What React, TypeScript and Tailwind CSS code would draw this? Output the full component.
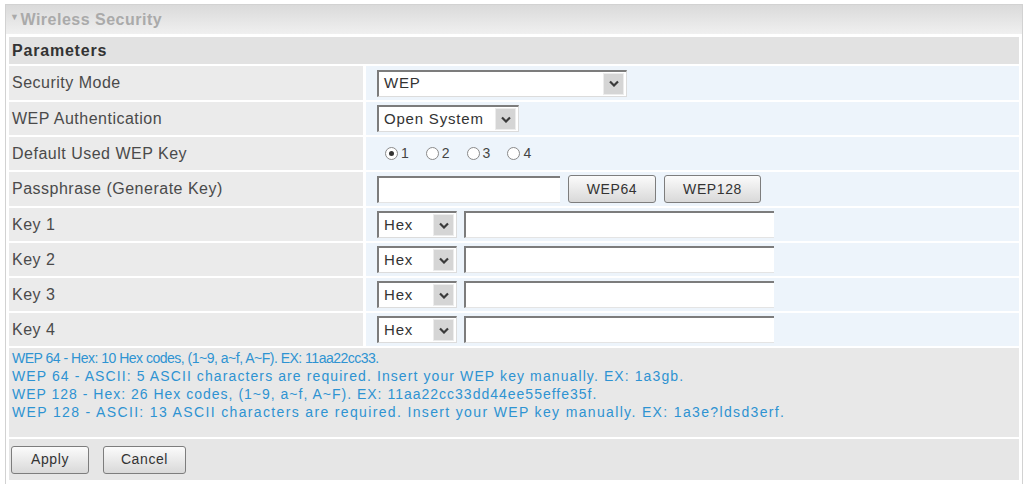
import React from 'react'

const font = { fontFamily: '"Liberation Sans", Arial, sans-serif' }

const Chevron = () => (
  <svg width="10" height="7" viewBox="0 0 10 7">
    <path d="M1 1.5 L5 5.5 L9 1.5" fill="none" stroke="#3a3a3a" strokeWidth="2.2" />
  </svg>
)

const Select = ({ value, width }: { value: string; width: string }) => (
  <div className={`${width} h-[27px] flex items-center bg-white border-t-2 border-l-2 border-[#7c7c7c] border-b border-r border-b-[#dcdcdc] border-r-[#dcdcdc]`}>
    <span className="flex-1 pl-[5px] text-[15px] tracking-[0.8px] text-[#333]">{value}</span>
    <span className="w-[21px] h-[22px] mr-[2px] flex items-center justify-center bg-[#d5d5d5] border border-[#ececec]">
      <Chevron />
    </span>
  </div>
)

const TextBox = ({ width }: { width: string }) => (
  <div className={`${width} h-[27px] bg-white border-t-2 border-l-2 border-[#7c7c7c] border-b border-b-[#e4e4e4]`} />
)

const Radio = ({ checked, label }: { checked?: boolean; label: string }) => (
  <span className="flex items-center gap-[3px] mr-[17px]">
    <span className="w-[13px] h-[13px] rounded-full border border-[#8a8a8a] bg-white flex items-center justify-center">
      {checked && <span className="w-[5px] h-[5px] rounded-full bg-[#333]" />}
    </span>
    <span className="text-[14px] text-[#444]">{label}</span>
  </span>
)

const Button = ({ label, width }: { label: string; width: string }) => (
  <button className={`${width} h-[28px] rounded-[3px] border border-[#7d7d7d] bg-gradient-to-b from-[#fbfbfb] to-[#d9d9d9] text-[14px] tracking-[0.6px] text-[#333]`}>
    {label}
  </button>
)

const Row = ({ label, h, children }: { label: string; h: string; children: React.ReactNode }) => (
  <div className={`flex gap-[3px] ${h}`}>
    <div className="w-[354px] bg-[#ebebeb] flex items-center pl-[3px] text-[16px] tracking-[0.5px] text-[#4a4a4a]">{label}</div>
    <div className="flex-1 bg-[#edf4fb] flex items-center pl-[11px] gap-[8px]">{children}</div>
  </div>
)

// each help line is spaced on its own
const notes = [
  { text: 'WEP 64 - Hex: 10 Hex codes, (1~9, a~f, A~F). EX: 11aa22cc33.', cls: 'tracking-[-0.5px]' },
  { text: 'WEP 64 - ASCII: 5 ASCII characters are required. Insert your WEP key manually. EX: 1a3gb.', cls: 'tracking-[1.1px]' },
  { text: 'WEP 128 - Hex: 26 Hex codes, (1~9, a~f, A~F). EX: 11aa22cc33dd44ee55effe35f.', cls: 'tracking-[1px]' },
  { text: 'WEP 128 - ASCII: 13 ASCII characters are required. Insert your WEP key manually. EX: 1a3e?ldsd3erf.', cls: 'tracking-[1.35px]' },
]

export default function App() {
  return (
    <div className="w-[1028px] h-[484px] bg-white pt-[4px] pl-[5px] overflow-hidden" style={font}>
      <div className="w-[1018px] h-[482px] border border-[#d2d2d2] flex flex-col">
        <div className="h-[29px] shrink-0 bg-gradient-to-b from-[#dadada] to-[#f0f0f0] flex items-center pl-[4px] text-[16px] font-bold tracking-[0.5px] text-[#aaaaaa]">
          <span className="text-[9px] mr-[1px] mt-[-3px]">▼</span>Wireless Security
        </div>
        <div className="flex flex-col gap-[2px] px-[3px] pt-[3px]">
          <div className="h-[27px] bg-[#e2e2e2] flex items-center pl-[3px] text-[16px] font-bold tracking-[0.8px] text-[#333]">
            Parameters
          </div>
          <Row label="Security Mode" h="h-[34px]">
            <Select value="WEP" width="w-[250px]" />
          </Row>
          <Row label="WEP Authentication" h="h-[33px]">
            <Select value="Open System" width="w-[142px]" />
          </Row>
          <Row label="Default Used WEP Key" h="h-[33px]">
            <div className="flex items-center pl-[8px]">
              <Radio checked label="1" />
              <Radio label="2" />
              <Radio label="3" />
              <Radio label="4" />
            </div>
          </Row>
          <Row label="Passphrase (Generate Key)" h="h-[34px]">
            <TextBox width="w-[183px]" />
            <Button label="WEP64" width="w-[88px]" />
            <Button label="WEP128" width="w-[97px]" />
          </Row>
          {['Key 1', 'Key 2', 'Key 3', 'Key 4'].map((k) => (
            <Row key={k} label={k} h="h-[33px]">
              <div className="flex items-center gap-[7px]">
                <Select value="Hex" width="w-[80px]" />
                <TextBox width="w-[310px]" />
              </div>
            </Row>
          ))}
          <div className="h-[89px] bg-[#e8e8e8] pl-[3px] pt-[1px] text-[14px] leading-[18px] text-[#2e93d2]">
            {notes.map((n) => (
              <div key={n.text} className={n.cls}>{n.text}</div>
            ))}
          </div>
          <div className="h-[41px] bg-[#e6e6e6] flex items-center pl-[2px] gap-[14px]">
            <Button label="Apply" width="w-[78px]" />
            <Button label="Cancel" width="w-[83px]" />
          </div>
        </div>
      </div>
    </div>
  )
}
